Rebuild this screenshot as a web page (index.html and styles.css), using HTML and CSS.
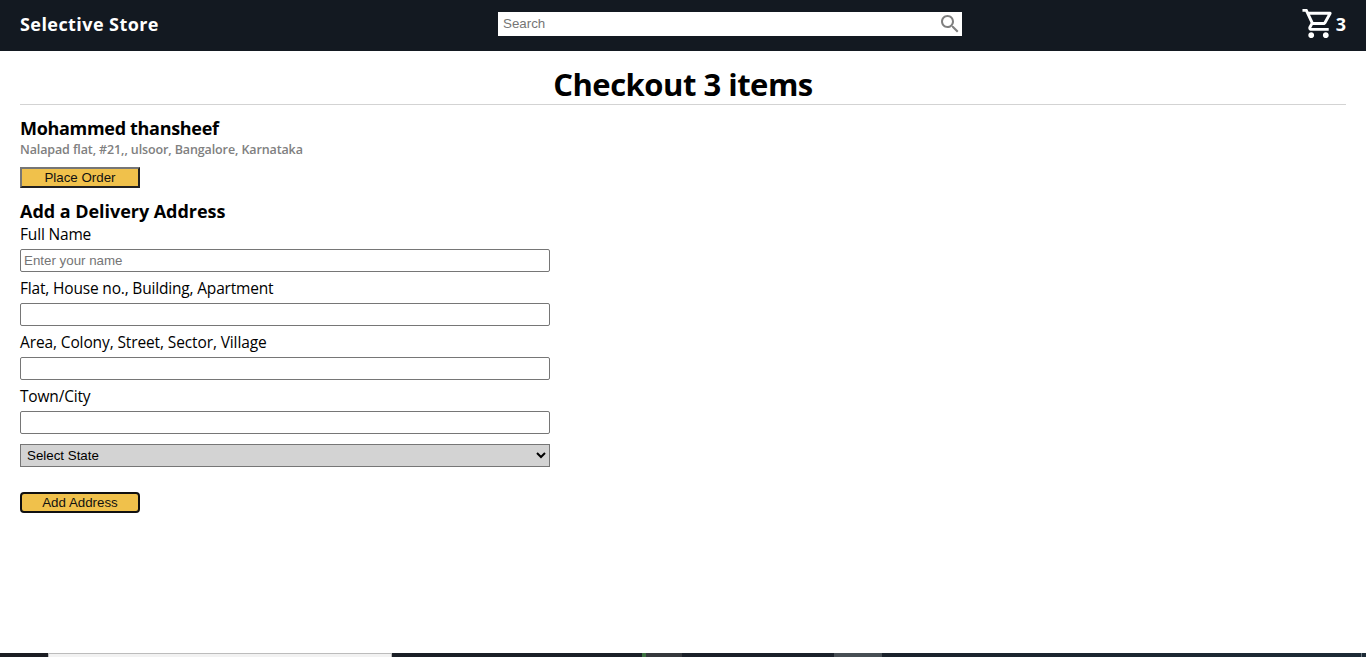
FILE: index.html
```html
<!DOCTYPE html>
<html lang="en">
<head>
<meta charset="utf-8">
<title>Selective Store</title>
<link rel="stylesheet" href="styles.css">
</head>
<body>
<header class="header">
  <div class="brand">Selective Store</div>
  <div class="search">
    <input class="search-input" type="text" placeholder="Search">
    <svg class="search-icon" viewBox="0 0 24 24"><path d="M15.5 14h-.79l-.28-.27C15.41 12.59 16 11.11 16 9.5 16 5.91 13.09 3 9.5 3S3 5.91 3 9.5 5.91 16 9.5 16c1.61 0 3.09-.59 4.23-1.57l.27.28v.79l5 4.99L20.49 19l-4.99-5zm-6 0C7.01 14 5 11.99 5 9.5S7.01 5 9.5 5 14 7.01 14 9.5 11.99 14 9.5 14z"/></svg>
  </div>
  <div class="cart">
    <svg class="cart-icon" viewBox="0 0 24 24"><path d="M15.55 13c.75 0 1.41-.41 1.75-1.03l3.58-6.49c.37-.66-.11-1.48-.87-1.48H5.21l-.94-2H1v2h2l3.6 7.59-1.35 2.44C4.52 15.37 5.48 17 7 17h12v-2H7l1.1-2h7.45zM6.16 6h12.15l-2.76 5H8.53L6.16 6zM7 18c-1.1 0-1.99.9-1.99 2S5.9 22 7 22s2-.9 2-2-.9-2-2-2zm10 0c-1.1 0-1.99.9-1.99 2s.89 2 1.99 2 2-.9 2-2-.9-2-2-2z"/></svg>
    <span class="cart-count">3</span>
  </div>
</header>
<main class="main">
  <h1 class="title">Checkout 3 items</h1>
  <section class="saved">
    <h3 class="heading name">Mohammed thansheef</h3>
    <p class="address">Nalapad flat, #21,, ulsoor, Bangalore, Karnataka</p>
    <button class="button place">Place Order</button>
  </section>
  <form class="form">
    <h3 class="heading">Add a Delivery Address</h3>
    <label class="label">Full Name</label>
    <input class="field" type="text" placeholder="Enter your name">
    <label class="label">Flat, House no., Building, Apartment</label>
    <input class="field" type="text">
    <label class="label area">Area, Colony, Street, Sector, Village</label>
    <input class="field" type="text">
    <label class="label">Town/City</label>
    <input class="field" type="text">
    <select class="select"><option>Select State</option></select>
    <button class="button submit" type="button">Add Address</button>
  </form>
</main>
<footer class="taskbar">
  <div class="task-search"></div>
  <div class="task-run"></div>
  <div class="task-green"></div>
  <div class="task-app"></div>
  <div class="task-gap"></div>
  <div class="task-active"></div>
  <div class="task-tray"></div>
</footer>
</body>
</html>
```
FILE: styles.css
```css
* { box-sizing: border-box; margin: 0; padding: 0; }
body {
  display: flex;
  flex-direction: column;
  height: 657px;
  overflow: hidden;
  background: #fff;
  color: #000;
  font-family: "Open Sans", "Noto Sans", sans-serif;
}
.header {
  display: flex;
  justify-content: space-between;
  height: 51px;
  padding: 0 20px;
  background: #131921;
  color: #fff;
}
.brand { width: 478px; font-size: 18px; font-weight: 700; line-height: 48px; letter-spacing: .43px; }
.search { display: flex; width: 464px; height: 24px; margin-top: 12px; background: #fff; }
.search-input {
  flex: 1;
  border: 0;
  padding: 0 5px 2px;
  font: 13.333px "Liberation Sans", Arial, sans-serif;
  background: #fff;
}
.search-input::placeholder, .field::placeholder { color: #757575; }
.search-icon { width: 24px; height: 24px; fill: #808080; }
.cart { display: flex; justify-content: flex-end; width: 384px; }
.cart-icon { width: 35px; height: 35px; margin-top: 6px; fill: #fff; }
.cart-count { font-size: 18px; font-weight: 700; line-height: 49px; }
.main { flex: 1; padding: 10px 20px 0; }
.title {
  height: 44px;
  border-bottom: 1px solid #d3d3d3;
  text-align: center;
  font-size: 31px;
  line-height: 46px;
  letter-spacing: -.5px;
}
.saved { padding-top: 10px; }
.heading { height: 26px; font-size: 18px; line-height: 26px; letter-spacing: -.04px; white-space: nowrap; }
.name { letter-spacing: -.31px; }
.address { height: 17px; color: #808080; font-size: 12.5px; font-weight: 600; line-height: 18px; letter-spacing: -.115px; }
.button {
  display: block;
  width: 120px;
  height: 21px;
  background: #f0c14b;
  color: #111;
  font: 13.333px "Liberation Sans", Arial, sans-serif;
}
.place { margin-top: 9px; border: 2px solid; border-color: #767676 #212121 #212121 #767676; }
.form { width: 530px; padding-top: 10px; }
.label { display: block; height: 25px; font-size: 15.5px; line-height: 21px; letter-spacing: -.18px; white-space: nowrap; }
.area { letter-spacing: -.12px; }
.field {
  display: block;
  width: 530px;
  height: 23px;
  margin-bottom: 6px;
  padding: 1px 3px;
  border: 1px solid #767676;
  border-radius: 2px;
  font: 13.333px "Liberation Sans", Arial, sans-serif;
}
.select {
  display: block;
  width: 530px;
  height: 23px;
  margin-top: 10px;
  padding-left: 2px;
  border: 1px solid #767676;
  border-radius: 0;
  background-color: #d3d3d3;
  color: #000;
  font: 13.333px "Liberation Sans", Arial, sans-serif;
}
.submit { margin-top: 25px; border: 2px solid #101010; border-radius: 4px; }
.taskbar { display: flex; height: 4px; background: linear-gradient(90deg, #1b1d22, #1a2029 55%, #1d2b36); }
.task-search { width: 344px; margin-left: 48px; background: #f2f2f2; border: 1px solid #bcbcbc; border-bottom: 0; }
.task-run { width: 250px; }
.task-green { width: 4px; background: #3c7040; }
.task-app { width: 36px; background: #35383c; }
.task-gap { width: 152px; }
.task-active { width: 48px; background: #474e54; }
.task-tray { width: 480px; border-right: 1px solid #6f7a82; }
```
